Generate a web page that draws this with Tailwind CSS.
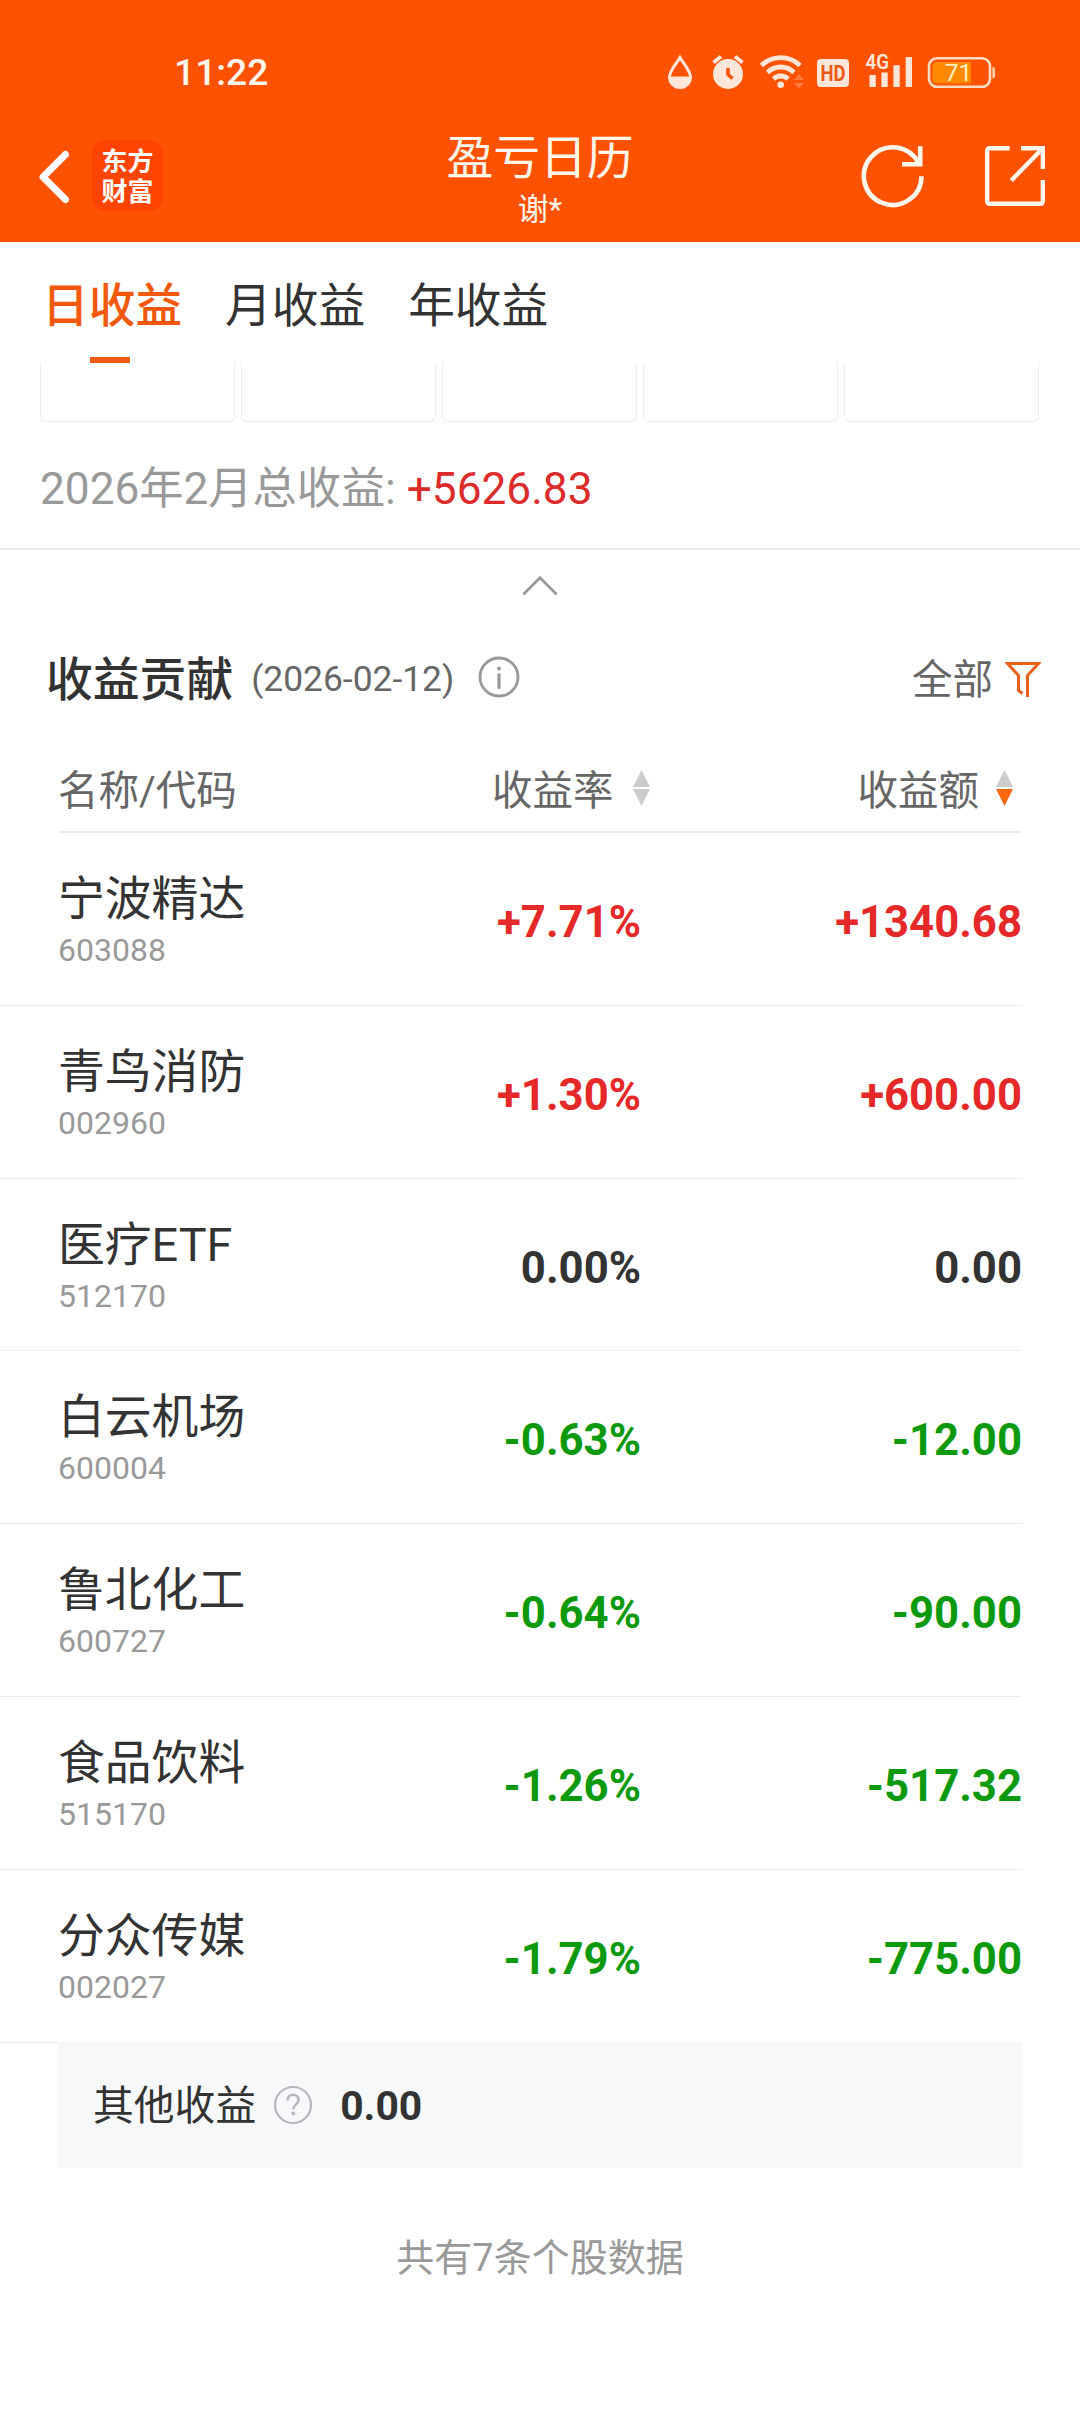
<!DOCTYPE html>
<html lang="zh-CN">
<head>
<meta charset="utf-8">
<title>盈亏日历</title>
<script src="https://cdn.jsdelivr.net/npm/@tailwindcss/browser@4"></script>
</head>
<body class="w-[1080px] h-[2412px] overflow-hidden bg-white text-[#333] font-['Roboto','Noto_Sans_CJK_SC',sans-serif] whitespace-nowrap">

<header class="h-[242px] bg-[#ff5200] text-[#fff6ec]">
  <!-- Status bar -->
  <div class="h-[106px] pt-[50px] pl-[174px] pr-[84px] flex justify-between items-start">
    <div class="-mt-px text-[37.200px] leading-[46px] font-medium">11:22</div>
    <svg class="w-[330px] h-[46px] text-[#ffe6d8]" viewBox="666 50 330 46" fill="none">
      <path d="M680 57.500C676.500 63.500 669.500 70.500 669.500 77a10.500 10.500 0 0 0 21 0C690.500 70.500 683.500 63.500 680 57.500Z" stroke="currentColor" stroke-width="3"/>
      <path d="M669 76.500h22a11 11 0 0 1-22 0Z" fill="currentColor"/>
      <circle cx="728" cy="74" r="15" fill="currentColor"/>
      <path d="M713.500 62.500l7.500-6M742.500 62.500l-7.500-6" stroke="currentColor" stroke-width="4"/>
      <path d="M728 68v6.500l4.500 4" stroke="#ff5200" stroke-width="3.600"/>
      <path d="M761.500 65.500a27.500 27.500 0 0 1 38.500 0M767.500 72.500a18.700 18.700 0 0 1 26.500 0M773.500 79a10.300 10.300 0 0 1 14.500 0" stroke="currentColor" stroke-width="4.800"/>
      <circle cx="780.700" cy="84.800" r="3.300" fill="currentColor"/>
      <path d="M794 80l5-6 5 6zM794 83l5 5.500 5-5.500z" fill="#ff7a3d"/>
      <rect x="817" y="59" width="32" height="28" rx="4" fill="currentColor"/>
      <text x="833" y="80.800" text-anchor="middle" textLength="25" lengthAdjust="spacingAndGlyphs" font-family="Roboto" font-size="22" font-weight="700" fill="#e85a14">HD</text>
      <text x="865.500" y="69" textLength="23.500" lengthAdjust="spacingAndGlyphs" font-family="Roboto" font-size="20" font-weight="600" fill="currentColor">4G</text>
      <path d="M869.500 75h6.300v12h-6.300zM881.400 72.500h6.300V87h-6.300zM893.400 65.300h6.300V87h-6.300zM905.700 57h6.300v30h-6.300z" fill="currentColor"/>
      <rect x="929" y="58.200" width="61" height="28.600" rx="8" stroke="#ffdcc0" stroke-width="2.600"/>
      <path d="M936 62h35v21.300h-35a3.500 3.500 0 0 1-3.500-3.500V65.500a3.500 3.500 0 0 1 3.500-3.500Z" fill="#ff8a00"/>
      <path d="M992.500 67c1.800 0 2.400 1 2.400 2.500v6.500c0 1.500-.6 2.500-2.400 2.500z" fill="#ffdcc0"/>
      <text x="958.500" y="80.800" text-anchor="middle" font-family="Roboto" font-size="24.500" font-weight="400" fill="#fff0c0">71</text>
    </svg>
  </div>
  <!-- Navigation bar -->
  <div class="h-[136px] grid grid-cols-[1fr_auto_1fr]">
    <div class="flex items-start pl-[38px] pt-[34px]">
      <svg class="w-[34px] h-[74px]" viewBox="38 140 34 74" fill="none" stroke="#fff" stroke-width="7" stroke-linecap="round" stroke-linejoin="round"><path d="M65.500 154.500L43 177l22.500 22.500"/></svg>
      <div class="ml-5 w-[71px] h-[71px] rounded-[14px] bg-[#ff4400] text-white font-bold text-[26px] leading-[26px] pt-[7px] flex flex-col items-center gap-[4px] font-['Noto_Sans_CJK_SC']"><span>东方</span><span>财富</span></div>
    </div>
    <div class="flex flex-col items-center">
      <div class="mt-[22px] h-[60px] text-[46.800px] leading-[60px]">盈亏日历</div>
      <div class="h-[44px] text-[31px] leading-[44px]">谢*</div>
    </div>
    <div class="flex items-start justify-end gap-[58px] pr-[33px] pt-[38px]">
      <svg class="w-[64px] h-[64px]" viewBox="861 144 64 64" fill="none" stroke="#fff6ec" stroke-width="4.600"><path d="M921.500 176.200A28.800 28.800 0 1 1 918.500 163.300M902 164.300h18.200V146.300"/></svg>
      <svg class="w-[64px] h-[64px]" viewBox="983 144 64 64" fill="none" stroke="#fff6ec" stroke-width="4.400"><path d="M1009.700 148.200H989.500a2.300 2.300 0 0 0-2.300 2.300V201.500a2.300 2.300 0 0 0 2.300 2.300H1040.500a2.300 2.300 0 0 0 2.300-2.300V180M1021 148.200h21.800V169M1042.300 148.700L1011.300 180.500"/></svg>
    </div>
  </div>
</header>

<!-- Period tabs -->
<nav class="h-[121px] pl-[42px] flex gap-[43px] text-[46.700px] leading-[60px]">
  <div class="pt-[34px] flex flex-col items-center text-[#f2590c] font-medium">日收益<span class="mt-[21px] mr-[4px] w-10 h-[6px] bg-[#f05a0f]"></span></div>
  <div class="pt-[34px]">月收益</div>
  <div class="pt-[34px]">年收益</div>
</nav>

<!-- Last calendar row -->
<div class="h-[59px] pl-10 pr-[41px] grid grid-cols-5 gap-[6px]">
  <div class="border border-t-0 border-[#ededed] rounded-b-md"></div>
  <div class="border border-t-0 border-[#ededed] rounded-b-md"></div>
  <div class="border border-t-0 border-[#ededed] rounded-b-md"></div>
  <div class="border border-t-0 border-[#ededed] rounded-b-md"></div>
  <div class="border border-t-0 border-[#ededed] rounded-b-md"></div>
</div>

<div class="h-[128px] pl-10 pt-[37px] border-b-2 border-[#ebebeb] text-[44.200px] leading-[60px] text-[#999]">2026年2月总收益: <span class="text-[#db2b2b]">+5626.83</span></div>

<div class="h-[80px] flex justify-center pt-[24px]">
  <svg class="w-[36px] h-[22px]" viewBox="522 574 36 22" fill="none" stroke="#999" stroke-width="2.800"><path d="M523.500 594.300L540 577.800l16.500 16.500"/></svg>
</div>

<!-- Section heading -->
<div class="h-[96px] pl-[46px] pr-[39px] flex items-center">
  <h2 class="pt-[3px] text-[46.800px] leading-[60px] font-medium">收益贡献</h2>
  <span class="ml-[18px] pt-[2px] text-[35.400px] leading-[60px] text-[#666]">(2026-02-12)</span>
  <svg class="-mt-[3px] ml-[24px] w-[42px] h-[42px]" viewBox="0 0 42 42" fill="none"><circle cx="21" cy="21" r="19" stroke="#999" stroke-width="2.800"/><circle cx="21" cy="12.500" r="2" fill="#999"/><path d="M21 18.500v13" stroke="#999" stroke-width="3.200" stroke-linecap="round"/></svg>
  <span class="ml-auto pt-[3px] text-[40.500px] leading-[60px] text-[#666]">全部</span>
  <svg class="ml-[12px] mt-[2px] w-[36px] h-[38px]" viewBox="0 0 36 38" fill="none" stroke="#e8611c" stroke-width="3"><path d="M22.500 37V15.500L33.500 3.500H2.500L13.500 15.500V30.500L17.500 33.500"/></svg>
</div>

<!-- Table header -->
<div class="h-[107px] ml-[58px] mr-[58px] border-b-2 border-[#ebebeb] pt-[35px] flex text-[40.500px] leading-[60px] text-[#666]">
  <div class="w-[434px]">名称/代码</div>
  <div class="flex gap-[19px]">收益率
    <svg class="mt-[9px] w-[17px] h-[36px] shrink-0" viewBox="0 0 17 36"><path d="M8.500 0L17 17H0z" fill="#ccc"/><path d="M8.500 36L17 19H0z" fill="#ccc"/></svg>
  </div>
  <div class="ml-auto mr-[9px] flex gap-[17px]">收益额
    <svg class="mt-[9px] w-[17px] h-[36px] shrink-0" viewBox="0 0 17 36"><path d="M8.500 0L17 17H0z" fill="#ccc"/><path d="M8.500 36L17 19H0z" fill="#f96711"/></svg>
  </div>
</div>

<!-- Holdings -->
<main class="mr-[58px]">
  <div class="h-[172.800px] pl-[58px] grid grid-cols-[300px_283px_381px] border-b border-[#ebebeb] text-[#e52828]">
    <div class="pt-[36px] text-[#333]"><div class="h-[59px] text-[46.800px] leading-[60px]">宁波精达</div><div class="text-[32px] leading-[44px] text-[#999]">603088</div></div>
    <div class="pt-[59px] text-right text-[43.700px] leading-[60px] font-bold">+7.71%</div>
    <div class="pt-[59px] text-right text-[43.700px] leading-[60px] font-bold">+1340.68</div>
  </div>
  <div class="h-[172.800px] pl-[58px] grid grid-cols-[300px_283px_381px] border-b border-[#ebebeb] text-[#e52828]">
    <div class="pt-[36px] text-[#333]"><div class="h-[59px] text-[46.800px] leading-[60px]">青鸟消防</div><div class="text-[32px] leading-[44px] text-[#999]">002960</div></div>
    <div class="pt-[59px] text-right text-[43.700px] leading-[60px] font-bold">+1.30%</div>
    <div class="pt-[59px] text-right text-[43.700px] leading-[60px] font-bold">+600.00</div>
  </div>
  <div class="h-[172.800px] pl-[58px] grid grid-cols-[300px_283px_381px] border-b border-[#ebebeb] text-[#333]">
    <div class="pt-[36px] text-[#333]"><div class="h-[59px] text-[46.800px] leading-[60px]">医疗ETF</div><div class="text-[32px] leading-[44px] text-[#999]">512170</div></div>
    <div class="pt-[59px] text-right text-[43.700px] leading-[60px] font-bold">0.00%</div>
    <div class="pt-[59px] text-right text-[43.700px] leading-[60px] font-bold">0.00</div>
  </div>
  <div class="h-[172.800px] pl-[58px] grid grid-cols-[300px_283px_381px] border-b border-[#ebebeb] text-[#0c9a0c]">
    <div class="pt-[36px] text-[#333]"><div class="h-[59px] text-[46.800px] leading-[60px]">白云机场</div><div class="text-[32px] leading-[44px] text-[#999]">600004</div></div>
    <div class="pt-[59px] text-right text-[43.700px] leading-[60px] font-bold">-0.63%</div>
    <div class="pt-[59px] text-right text-[43.700px] leading-[60px] font-bold">-12.00</div>
  </div>
  <div class="h-[172.800px] pl-[58px] grid grid-cols-[300px_283px_381px] border-b border-[#ebebeb] text-[#0c9a0c]">
    <div class="pt-[36px] text-[#333]"><div class="h-[59px] text-[46.800px] leading-[60px]">鲁北化工</div><div class="text-[32px] leading-[44px] text-[#999]">600727</div></div>
    <div class="pt-[59px] text-right text-[43.700px] leading-[60px] font-bold">-0.64%</div>
    <div class="pt-[59px] text-right text-[43.700px] leading-[60px] font-bold">-90.00</div>
  </div>
  <div class="h-[172.800px] pl-[58px] grid grid-cols-[300px_283px_381px] border-b border-[#ebebeb] text-[#0c9a0c]">
    <div class="pt-[36px] text-[#333]"><div class="h-[59px] text-[46.800px] leading-[60px]">食品饮料</div><div class="text-[32px] leading-[44px] text-[#999]">515170</div></div>
    <div class="pt-[59px] text-right text-[43.700px] leading-[60px] font-bold">-1.26%</div>
    <div class="pt-[59px] text-right text-[43.700px] leading-[60px] font-bold">-517.32</div>
  </div>
  <div class="h-[172.800px] pl-[58px] grid grid-cols-[300px_283px_381px] border-b border-[#ebebeb] text-[#0c9a0c]">
    <div class="pt-[36px] text-[#333]"><div class="h-[59px] text-[46.800px] leading-[60px]">分众传媒</div><div class="text-[32px] leading-[44px] text-[#999]">002027</div></div>
    <div class="pt-[59px] text-right text-[43.700px] leading-[60px] font-bold">-1.79%</div>
    <div class="pt-[59px] text-right text-[43.700px] leading-[60px] font-bold">-775.00</div>
  </div>
  <div class="-mt-px ml-[58px] h-[126px] relative bg-[#f6f8fa] pl-[35px] flex items-center text-[40.800px] leading-[60px]">
    <span class="pt-[3px]">其他收益</span>
    <svg class="ml-[17px] w-[40px] h-[40px]" viewBox="0 0 40 40" fill="none"><circle cx="20" cy="20" r="18" stroke="#b8b8bc" stroke-width="2.200"/><path d="M14.500 15.500c0-3.500 2.400-5.700 5.600-5.700s5.500 2.100 5.500 5.100c0 4.300-5.400 4.700-5.400 9.300" stroke="#b8b8bc" stroke-width="2.600"/><circle cx="20.200" cy="28.500" r="1.900" fill="#b8b8bc"/></svg>
    <span class="ml-[27px] pt-[3px] font-bold">0.00</span>
  </div>
</main>

<footer class="pt-[60px] text-center text-[38px] leading-[60px] text-[#999]">共有7条个股数据</footer>
</body>
</html>
